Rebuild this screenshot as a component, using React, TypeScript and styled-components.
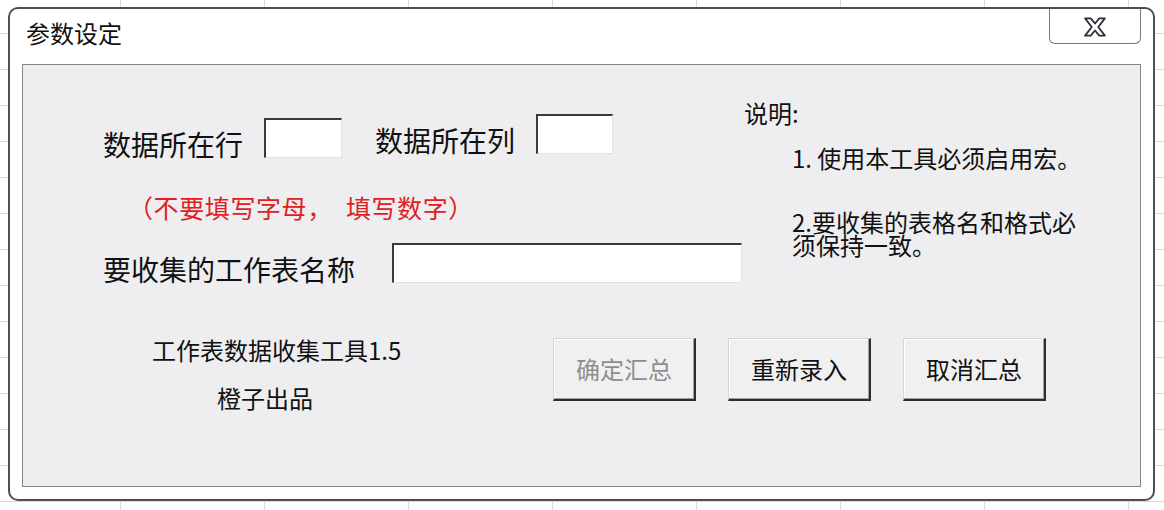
import React from "react";
import styled, { createGlobalStyle } from "styled-components";

const GlobalStyle = createGlobalStyle`
  html, body { margin: 0; padding: 0; }
  body {
    height: 510px;
    overflow: hidden;
    background-color: #ffffff;
    background-image:
      linear-gradient(to right, #dadada 1px, transparent 1px),
      linear-gradient(to bottom, #dadada 1px, transparent 1px);
    background-size: 144px 36px, 144px 36px;
    background-position: 120px 0, 0 33px;
    font-family: "Noto Sans CJK SC", "Noto Sans", sans-serif;
    color: #111;
  }
`;

const Dialog = styled.div`
  box-sizing: border-box;
  width: 1147px;
  height: 494px;
  margin: 7px 0 0 8px;
  border: 2px solid #505050;
  border-radius: 10px;
  background: #ffffff;
  display: flex;
  flex-direction: column;
  padding: 0 12px 12px 12px;
`;

const TitleBar = styled.div`
  display: flex;
  justify-content: space-between;
  align-items: flex-start;
  height: 55px;
  flex-shrink: 0;
`;

const Title = styled.div`
  margin-top: 12px;
  padding-left: 4px;
  font-size: 24px;
  line-height: 24px;
  color: #111;
`;

const CloseButton = styled.div`
  box-sizing: border-box;
  width: 92px;
  height: 35px;
  border: 1px solid #7a7a7a;
  border-top: none;
  border-radius: 0 0 6px 6px;
  background: #ffffff;
  display: flex;
  align-items: center;
  justify-content: center;
  padding-top: 1px;
`;

const Panel = styled.div`
  flex: 1;
  border: 1px solid #858585;
  background: #eeeef0;
  display: flex;
  flex-direction: column;
`;

const TopArea = styled.div`
  display: grid;
  grid-template-columns: 721px 1fr;
`;

const Form = styled.div`
  display: flex;
  flex-direction: column;
  padding: 49px 0 0 80px;
`;

const FieldRow = styled.div<{ $top?: number }>`
  display: flex;
  align-items: flex-start;
  margin-top: ${(p) => p.$top ?? 0}px;
`;

const FieldGroup = styled.div<{ $drop?: number; $left?: number }>`
  display: flex;
  align-items: flex-start;
  margin-top: ${(p) => p.$drop ?? 0}px;
  margin-left: ${(p) => p.$left ?? 0}px;
`;

const Label = styled.label`
  font-size: 28px;
  line-height: 28px;
  margin-top: 12px;
  white-space: nowrap;
  color: #111;
`;

const TextBox = styled.input<{ $w: number; $gap: number }>`
  box-sizing: border-box;
  width: ${(p) => p.$w}px;
  height: 40px;
  margin: 0 0 0 ${(p) => p.$gap}px;
  padding: 0 4px;
  background: #ffffff;
  border-top: 2px solid #3a3a3a;
  border-left: 2px solid #3a3a3a;
  border-right: 1px solid #e2e2e2;
  border-bottom: 1px solid #e2e2e2;
  outline: none;
  font-family: inherit;
  font-size: 20px;
`;

const Hint = styled.div`
  margin: 37px 0 0 25px;
  font-size: 25px;
  line-height: 25px;
  letter-spacing: 0.6px;
  color: #e0201e;
  white-space: pre;
`;

const Notes = styled.div`
  display: flex;
  flex-direction: column;
  padding-top: 36px;
`;

const NotesTitle = styled.div`
  font-size: 24px;
  line-height: 24px;
  color: #111;
`;

const NoteItem = styled.div<{ $top: number }>`
  margin: ${(p) => p.$top}px 0 0 48px;
  width: 292px;
  font-size: 24px;
  line-height: 23px;
  color: #111;
`;

const BottomArea = styled.div`
  display: flex;
  align-items: flex-start;
  margin-top: 55px;
`;

const Credits = styled.div`
  width: 530px;
  display: flex;
  flex-direction: column;
`;

const CreditLine = styled.div<{ $indent: number; $top?: number }>`
  padding-left: ${(p) => p.$indent}px;
  margin-top: ${(p) => p.$top ?? 0}px;
  font-size: 24px;
  line-height: 24px;
  color: #111;
  white-space: nowrap;
`;

const ButtonRow = styled.div`
  display: flex;
  gap: 32px;
`;

const FormButton = styled.button<{ $disabled?: boolean }>`
  box-sizing: border-box;
  width: 143px;
  height: 63px;
  padding: 0;
  background: #f0f0f1;
  border-top: 1px solid #d6d6d6;
  border-left: 1px solid #d6d6d6;
  border-right: 2px solid #2e2e2e;
  border-bottom: 2px solid #2e2e2e;
  box-shadow: inset -1px -1px 0 #a0a0a0, inset 1px 1px 0 #ffffff;
  font-family: inherit;
  font-size: 24px;
  line-height: 24px;
  color: ${(p) => (p.$disabled ? "#8e8e8e" : "#111")};
  cursor: default;
`;

const CloseIcon = () => (
  <svg width="24" height="22" viewBox="0 0 23 21">
    <path
      d="M2 2.2 L7.4 2.2 L11.5 7.2 L15.6 2.2 L21 2.2 L14.6 10.5 L21 18.8 L15.6 18.8 L11.5 13.8 L7.4 18.8 L2 18.8 L8.4 10.5 Z"
      fill="#ffffff"
      stroke="#2f2f3a"
      strokeWidth="1.7"
      strokeLinejoin="round"
    />
  </svg>
);

export default function App() {
  return (
    <>
      <GlobalStyle />
      <Dialog>
        <TitleBar>
          <Title>参数设定</Title>
          <CloseButton>
            <CloseIcon />
          </CloseButton>
        </TitleBar>
        <Panel>
          <TopArea>
            <Form>
              <FieldRow>
                <FieldGroup $drop={4}>
                  <Label>数据所在行</Label>
                  <TextBox $w={78} $gap={21} />
                </FieldGroup>
                <FieldGroup $left={33}>
                  <Label>数据所在列</Label>
                  <TextBox $w={77} $gap={21} />
                </FieldGroup>
              </FieldRow>
              <Hint>（不要填写字母，　填写数字）</Hint>
              <FieldRow $top={23}>
                <FieldGroup>
                  <Label>要收集的工作表名称</Label>
                  <TextBox $w={350} $gap={37} />
                </FieldGroup>
              </FieldRow>
            </Form>
            <Notes>
              <NotesTitle>说明:</NotesTitle>
              <NoteItem $top={21}>1. 使用本工具必须启用宏。</NoteItem>
              <NoteItem $top={41}>2.要收集的表格名和格式必须保持一致。</NoteItem>
            </Notes>
          </TopArea>
          <BottomArea>
            <Credits>
              <CreditLine $indent={129}>工作表数据收集工具1.5</CreditLine>
              <CreditLine $indent={194} $top={24}>橙子出品</CreditLine>
            </Credits>
            <ButtonRow>
              <FormButton $disabled>确定汇总</FormButton>
              <FormButton>重新录入</FormButton>
              <FormButton>取消汇总</FormButton>
            </ButtonRow>
          </BottomArea>
        </Panel>
      </Dialog>
    </>
  );
}
